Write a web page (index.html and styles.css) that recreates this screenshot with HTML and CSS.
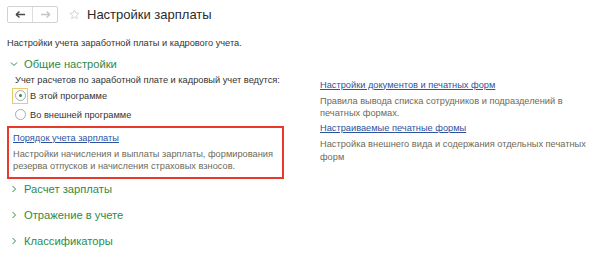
FILE: index.html
```html
<!DOCTYPE html>
<html lang="ru">
<head>
<meta charset="utf-8">
<link rel="stylesheet" href="styles.css">
</head>
<body>
<div class="page">
  <header class="topbar">
    <div class="nav">
      <span class="nav-btn back">
        <svg width="11" height="9" viewBox="0 0 11 9"><path d="M1 4.5h9M1 4.5l3.5-3M1 4.5l3.5 3" stroke="#4a4a4a" stroke-width="1.5" fill="none"/></svg>
      </span>
      <span class="nav-btn fwd">
        <svg width="11" height="9" viewBox="0 0 11 9"><path d="M1 4.5h9M10 4.5l-3.5-3M10 4.5l-3.5 3" stroke="#c4c4c4" stroke-width="1.3" fill="none"/></svg>
      </span>
    </div>
    <svg class="star" width="11" height="11" viewBox="0 0 24 24"><path d="M12 2l2.9 6.6 7.1.6-5.4 4.7 1.6 7-6.2-3.7-6.2 3.7 1.6-7L2 9.2l7.1-.6z" fill="none" stroke="#cfcfcf" stroke-width="1.8" stroke-linejoin="round"/></svg>
    <h1 class="title">Настройки зарплаты</h1>
  </header>

  <p class="subtitle">Настройки учета заработной платы и кадрового учета.</p>

  <section class="group open">
    <div class="group-head">
      <svg class="chev" width="8" height="8" viewBox="0 0 8 8"><path d="M1 2.5l3 3 3-3" stroke="#2e8b46" stroke-width="1" fill="none"/></svg>
      <span>Общие настройки</span>
    </div>
    <div class="cols">
      <div class="col-left">
        <div class="radio-label">Учет расчетов по заработной плате и кадровый учет ведутся:</div>
        <div class="radio-row first">
          <span class="radio-focus"><span class="radio checked"></span></span>
          <span class="radio-text">В этой программе</span>
        </div>
        <div class="radio-row">
          <span class="radio-nofocus"><span class="radio"></span></span>
          <span class="radio-text">Во внешней программе</span>
        </div>
        <div class="highlight">
          <a class="link" href="#">Порядок учета зарплаты</a>
          <div class="desc">Настройки начисления и выплаты зарплаты, формирования резерва отпусков и начисления страховых взносов.</div>
        </div>
      </div>
      <div class="col-right">
        <a class="link" href="#">Настройки документов и печатных форм</a>
        <div class="desc">Правила вывода списка сотрудников и подразделений в печатных формах.</div>
        <a class="link link-2" href="#">Настраиваемые печатные формы</a>
        <div class="desc">Настройка внешнего вида и содержания отдельных печатных форм</div>
      </div>
    </div>
  </section>

  <div class="group-head closed">
    <svg class="chev" width="8" height="8" viewBox="0 0 8 8"><path d="M2.5 1l3 3-3 3" stroke="#2e8b46" stroke-width="1" fill="none"/></svg>
    <span>Расчет зарплаты</span>
  </div>
  <div class="group-head closed">
    <svg class="chev" width="8" height="8" viewBox="0 0 8 8"><path d="M2.5 1l3 3-3 3" stroke="#2e8b46" stroke-width="1" fill="none"/></svg>
    <span>Отражение в учете</span>
  </div>
  <div class="group-head closed">
    <svg class="chev" width="8" height="8" viewBox="0 0 8 8"><path d="M2.5 1l3 3-3 3" stroke="#2e8b46" stroke-width="1" fill="none"/></svg>
    <span>Классификаторы</span>
  </div>
</div>
</body>
</html>
```

FILE: styles.css
```css
html, body {
  margin: 0;
  padding: 0;
  background: #ffffff;
}
body {
  font-family: "Liberation Sans", Arial, sans-serif;
  font-size: 9.25px;
  color: #333333;
}
.page {
  padding: 5px 7px 0 7px;
}
.topbar {
  display: flex;
  align-items: center;
  height: 18px;
}
.nav {
  display: flex;
  border: 1px solid #d2d2d2;
  border-radius: 2px;
  height: 15px;
  background: #ffffff;
}
.nav-btn {
  width: 24px;
  display: flex;
  align-items: center;
  justify-content: center;
}
.nav-btn.back {
  border-right: 1px solid #dddddd;
}
.star {
  margin-left: 11px;
}
.title {
  margin: 0 0 0 7px;
  font-size: 13px;
  font-weight: normal;
  color: #2b2b2b;
}
.subtitle {
  margin: 14px 0 0 0;
  line-height: 12px;
  color: #333333;
}
.group-head {
  display: flex;
  align-items: center;
  color: #2e8b46;
  font-size: 11.2px;
  height: 16px;
}
.group-head .chev {
  margin: 0 6px 0 3px;
}
.group.open .group-head {
  margin-top: 7px;
}
.cols {
  display: flex;
}
.col-left {
  width: 277px;
  flex: none;
}
.col-right {
  margin-left: 36px;
  width: 272px;
  padding-top: 6.5px;
}
.radio-label {
  margin: 2px 0 0 8px;
  line-height: 12px;
}
.radio-row {
  display: flex;
  align-items: center;
  height: 17px;
  margin-top: 2px;
}
.radio-row.first {
  margin-top: 1px;
}
.radio-focus, .radio-nofocus {
  width: 16px;
  height: 16px;
  margin-left: 5px;
  display: flex;
  align-items: center;
  justify-content: center;
  box-sizing: border-box;
}
.radio-focus {
  border: 1px solid #e6cc6a;
}
.radio-nofocus {
  border: 1px solid transparent;
}
.radio {
  width: 11px;
  height: 11px;
  border-radius: 50%;
  border: 1px solid #a9a9a9;
  box-sizing: border-box;
  position: relative;
  background: #fff;
}
.radio.checked::after {
  content: "";
  position: absolute;
  left: 3px;
  top: 3px;
  width: 3px;
  height: 3px;
  border-radius: 50%;
  background: #2e8b46;
}
.radio-text {
  margin-left: 2px;
}
.highlight {
  margin-top: 3px;
  border: 2px solid #e8392c;
  padding: 3.5px 0 4px 4px;
}
.link {
  display: block;
  width: fit-content;
  color: #2d52a0;
  text-decoration: underline;
  line-height: 13px;
}
.desc {
  color: #6e6a5a;
  line-height: 12.5px;
  margin-top: 3px;
}
.link-2 {
  margin-top: 2.5px;
}
.group-head.closed {
  margin-top: 10px;
}
.group + .group-head.closed {
  margin-top: 2px;
}
```
